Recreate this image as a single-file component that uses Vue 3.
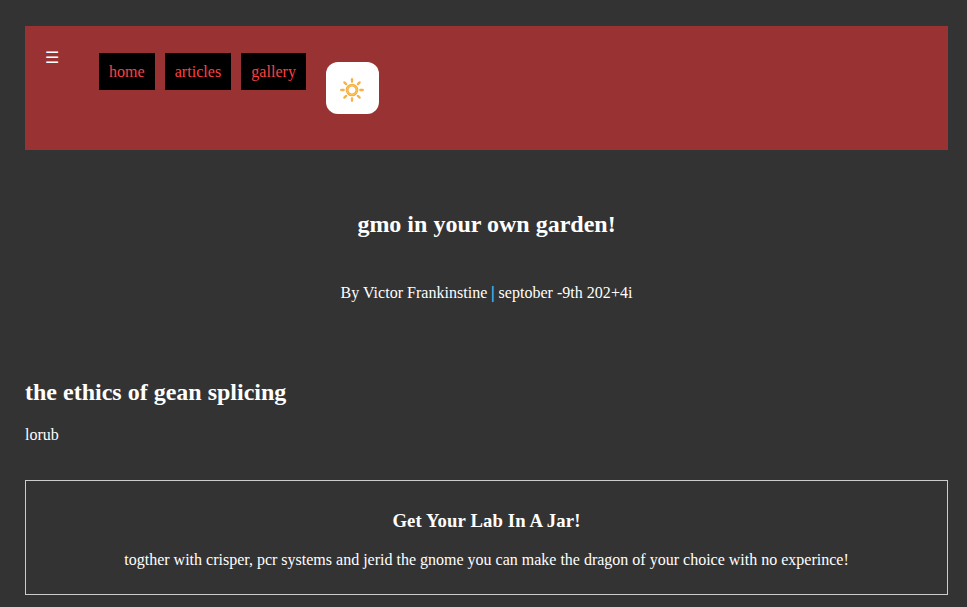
<script setup>
const links = ['home', 'articles', 'gallery']
const rays = [0, 45, 90, 135, 180, 225, 270, 315]
</script>

<template>
  <div class="page">
    <header class="bar">
      <span class="menu">☰</span>
      <nav class="links">
        <a v-for="l in links" :key="l" class="link">{{ l }}</a>
      </nav>
      <button class="theme" aria-label="theme">
        <svg width="26" height="26" viewBox="-13 -13 26 26">
          <circle r="4.9" fill="#fff" stroke="#f6ab3c" stroke-width="2.8" />
          <circle r="4.9" fill="none" stroke="#ffc95c" stroke-width="1" />
          <path v-for="r in rays" :key="r" d="M0 -8.3V-10.8" :transform="`rotate(${r})`" stroke="#f7b04a" stroke-width="2.3" stroke-linecap="round" />
        </svg>
      </button>
    </header>
    <section class="hero">
      <h1>gmo in your own garden!</h1>
      <p class="by">By Victor Frankinstine <span class="sep">|</span> septober -9th 202+4i</p>
    </section>
    <main>
      <h2>the ethics of gean splicing</h2>
      <p class="body">lorub</p>
    </main>
    <aside class="ad">
      <h3>Get Your Lab In A Jar!</h3>
      <p>togther with crisper, pcr systems and jerid the gnome you can make the dragon of your choice with no experince!</p>
    </aside>
  </div>
</template>

<style>
body { background: #333; overflow: hidden; }
</style>
<style scoped>
.page { padding: 26px 19px 0 25px; color: #fff; font: 16px/18px "Liberation Serif", "Times New Roman", serif; }
h1, h2, h3, p { margin: 0; }
.bar { display: flex; align-items: flex-start; height: 124px; box-sizing: border-box; padding: 22px 20px 0; background: #993333; }
.menu { width: 54px; line-height: 20px; }
.links { display: flex; gap: 10px; padding-top: 5px; }
.link { height: 37px; line-height: 38px; padding: 0 10px; background: #000; color: #ff4040; letter-spacing: 0.04px; }
.theme { display: flex; align-items: center; justify-content: center; width: 53px; height: 52px; margin: 14px 0 0 20px; padding: 3px 0 0; border: 0; border-radius: 12px; background: #fff; }
.hero { padding-top: 60px; text-align: center; }
h1, h2 { font-size: 24px; line-height: 28px; }
.by { margin-top: 46px; letter-spacing: 0.02px; }
.sep { color: #55ccff; text-shadow: 0 0 1px #33bbff; }
main { padding-top: 76px; }
.body { margin-top: 20px; }
.ad { margin-top: 36px; height: 115px; box-sizing: border-box; padding-top: 29px; border: 1px solid #ccc; text-align: center; }
h3 { font-size: 18.72px; line-height: 21px; letter-spacing: 0.12px; }
.ad p { margin-top: 20px; }
</style>
